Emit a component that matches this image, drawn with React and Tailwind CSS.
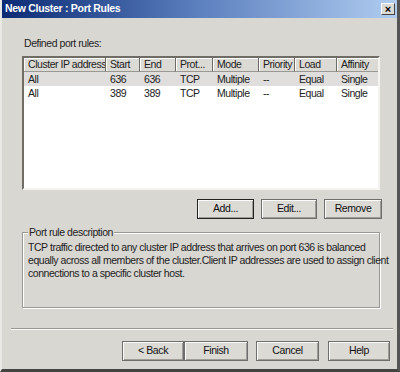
import React from 'react';

const cols = [
    { label: 'Cluster IP address', w: 'w-[82px]' },
    { label: 'Start', w: 'w-[34px]' },
    { label: 'End', w: 'w-[36px]' },
    { label: 'Prot...', w: 'w-[37px]' },
    { label: 'Mode', w: 'w-[46px]' },
    { label: 'Priority', w: 'w-[36px]' },
    { label: 'Load', w: 'w-[42px]' },
    { label: 'Affinity', w: 'w-[42px]' },
];

const rows = [
    ['All', '636', '636', 'TCP', 'Multiple', '--', 'Equal', 'Single'],
    ['All', '389', '389', 'TCP', 'Multiple', '--', 'Equal', 'Single'],
];

const Btn = ({ children, w = 'w-[57px]', isDefault = false }) => (
    <div
        className={`${w} h-[20px] flex items-center justify-center text-[10.5px] tracking-[-0.4px] text-[#111] bg-[#dcdad5] border ${isDefault ? 'border-[#222]' : 'border-[#6e6e6e]'} shadow-[inset_1px_1px_0_#fbfbfa,inset_-1px_-1px_0_#a09d97]`}
    >
        {children}
    </div>
);

export default function App() {
    return (
        <div
            className="w-[400px] h-[372px] bg-[#d9d7d2] flex flex-col border-r-[3px] border-b-[3px] border-l-[2px] border-r-[#555] border-b-[#444] border-l-[#e9e8e4] overflow-hidden"
            style={{ fontFamily: '"Liberation Sans", Arial, sans-serif' }}
        >
            {/* Title bar */}
            <div className="h-[18px] shrink-0 flex items-center justify-between bg-gradient-to-r from-[#0b2a74] via-[#5d80bf] to-[#b0cdf0] pl-[3px] pr-[2px]">
                <span className="text-white font-bold text-[10.5px] tracking-[-0.3px]">New Cluster : Port Rules</span>
                <div className="w-[14px] h-[12px] bg-[#dcdad5] border border-t-[#fff] border-l-[#fff] border-r-[#444] border-b-[#444] flex items-center justify-center text-[11px] font-bold leading-none text-black">
                    ×
                </div>
            </div>

            <div className="flex-1 flex flex-col px-[20px] pt-[19px] text-[10.5px] tracking-[-0.45px] text-[#222]">
                <div className="h-[13px] leading-[13px] pl-[2px]">Defined port rules:</div>

                {/* List view */}
                <div className="mt-[6px] h-[134px] w-[358px] bg-white border-[2px] border-t-[#6f6c66] border-l-[#6f6c66] border-r-[#f4f3f0] border-b-[#f4f3f0] overflow-hidden">
                    <div className="flex h-[14px] bg-[#dcdad5]">
                        {cols.map((c) => (
                            <div
                                key={c.label}
                                className={`${c.w} shrink-0 h-[14px] border-r border-b border-r-[#6d6b66] border-b-[#9a9892] leading-[13px] pl-[4px] overflow-hidden whitespace-nowrap shadow-[inset_1px_1px_0_#fff]`}
                            >
                                {c.label}
                            </div>
                        ))}
                        <div className="flex-1 border-b border-b-[#9a9892] shadow-[inset_1px_1px_0_#fff]" />
                    </div>
                    {rows.map((r, i) => (
                        <div key={i} className={`flex h-[14px] ${i === 0 ? 'bg-[#dfdedc]' : 'bg-white'}`}>
                            {r.map((v, j) => (
                                <div
                                    key={j}
                                    className={`${cols[j].w} shrink-0 leading-[14px] pl-[4px] whitespace-nowrap overflow-hidden`}
                                >
                                    {v}
                                </div>
                            ))}
                        </div>
                    ))}
                </div>

                {/* List buttons */}
                <div className="mt-[9px] flex justify-end gap-[7px] w-[360px]">
                    <Btn isDefault>Add...</Btn>
                    <Btn w="w-[56px]">Edit...</Btn>
                    <Btn w="w-[58px]">Remove</Btn>
                </div>

                {/* Group box */}
                <div className="relative mt-[13px] h-[76px] w-[358px] border border-[#9a9892] shadow-[1px_1px_0_#fff,inset_1px_1px_0_#fff]">
                    <span className="absolute -top-[8px] left-[5px] bg-[#d9d7d2] px-[1px] leading-[14px]">
                        Port rule description
                    </span>
                    <p className="pt-[8px] pl-[5px] pr-[2px] leading-[13px] whitespace-nowrap">
                        TCP traffic directed to any cluster IP address that arrives on port 636 is balanced
                        <br />
                        equally across all members of the cluster.Client IP addresses are used to assign client
                        <br />
                        connections to a specific cluster host.
                    </p>
                </div>
            </div>

            {/* Separator + wizard buttons */}
            <div className="shrink-0 pl-[9px] pr-[4px]">
                <div className="h-[2px] border-t border-t-[#9a9892] border-b border-b-[#fbfbfa]" />
            </div>
            <div className="shrink-0 h-[39px] flex items-start justify-end pt-[11px] pr-[7px]">
                <Btn w="w-[62px]">&lt; Back</Btn>
                <Btn w="w-[64px]">Finish</Btn>
                <div className="w-[8px]" />
                <Btn w="w-[63px]">Cancel</Btn>
                <div className="w-[9px]" />
                <Btn w="w-[62px]">Help</Btn>
            </div>
        </div>
    );
}
